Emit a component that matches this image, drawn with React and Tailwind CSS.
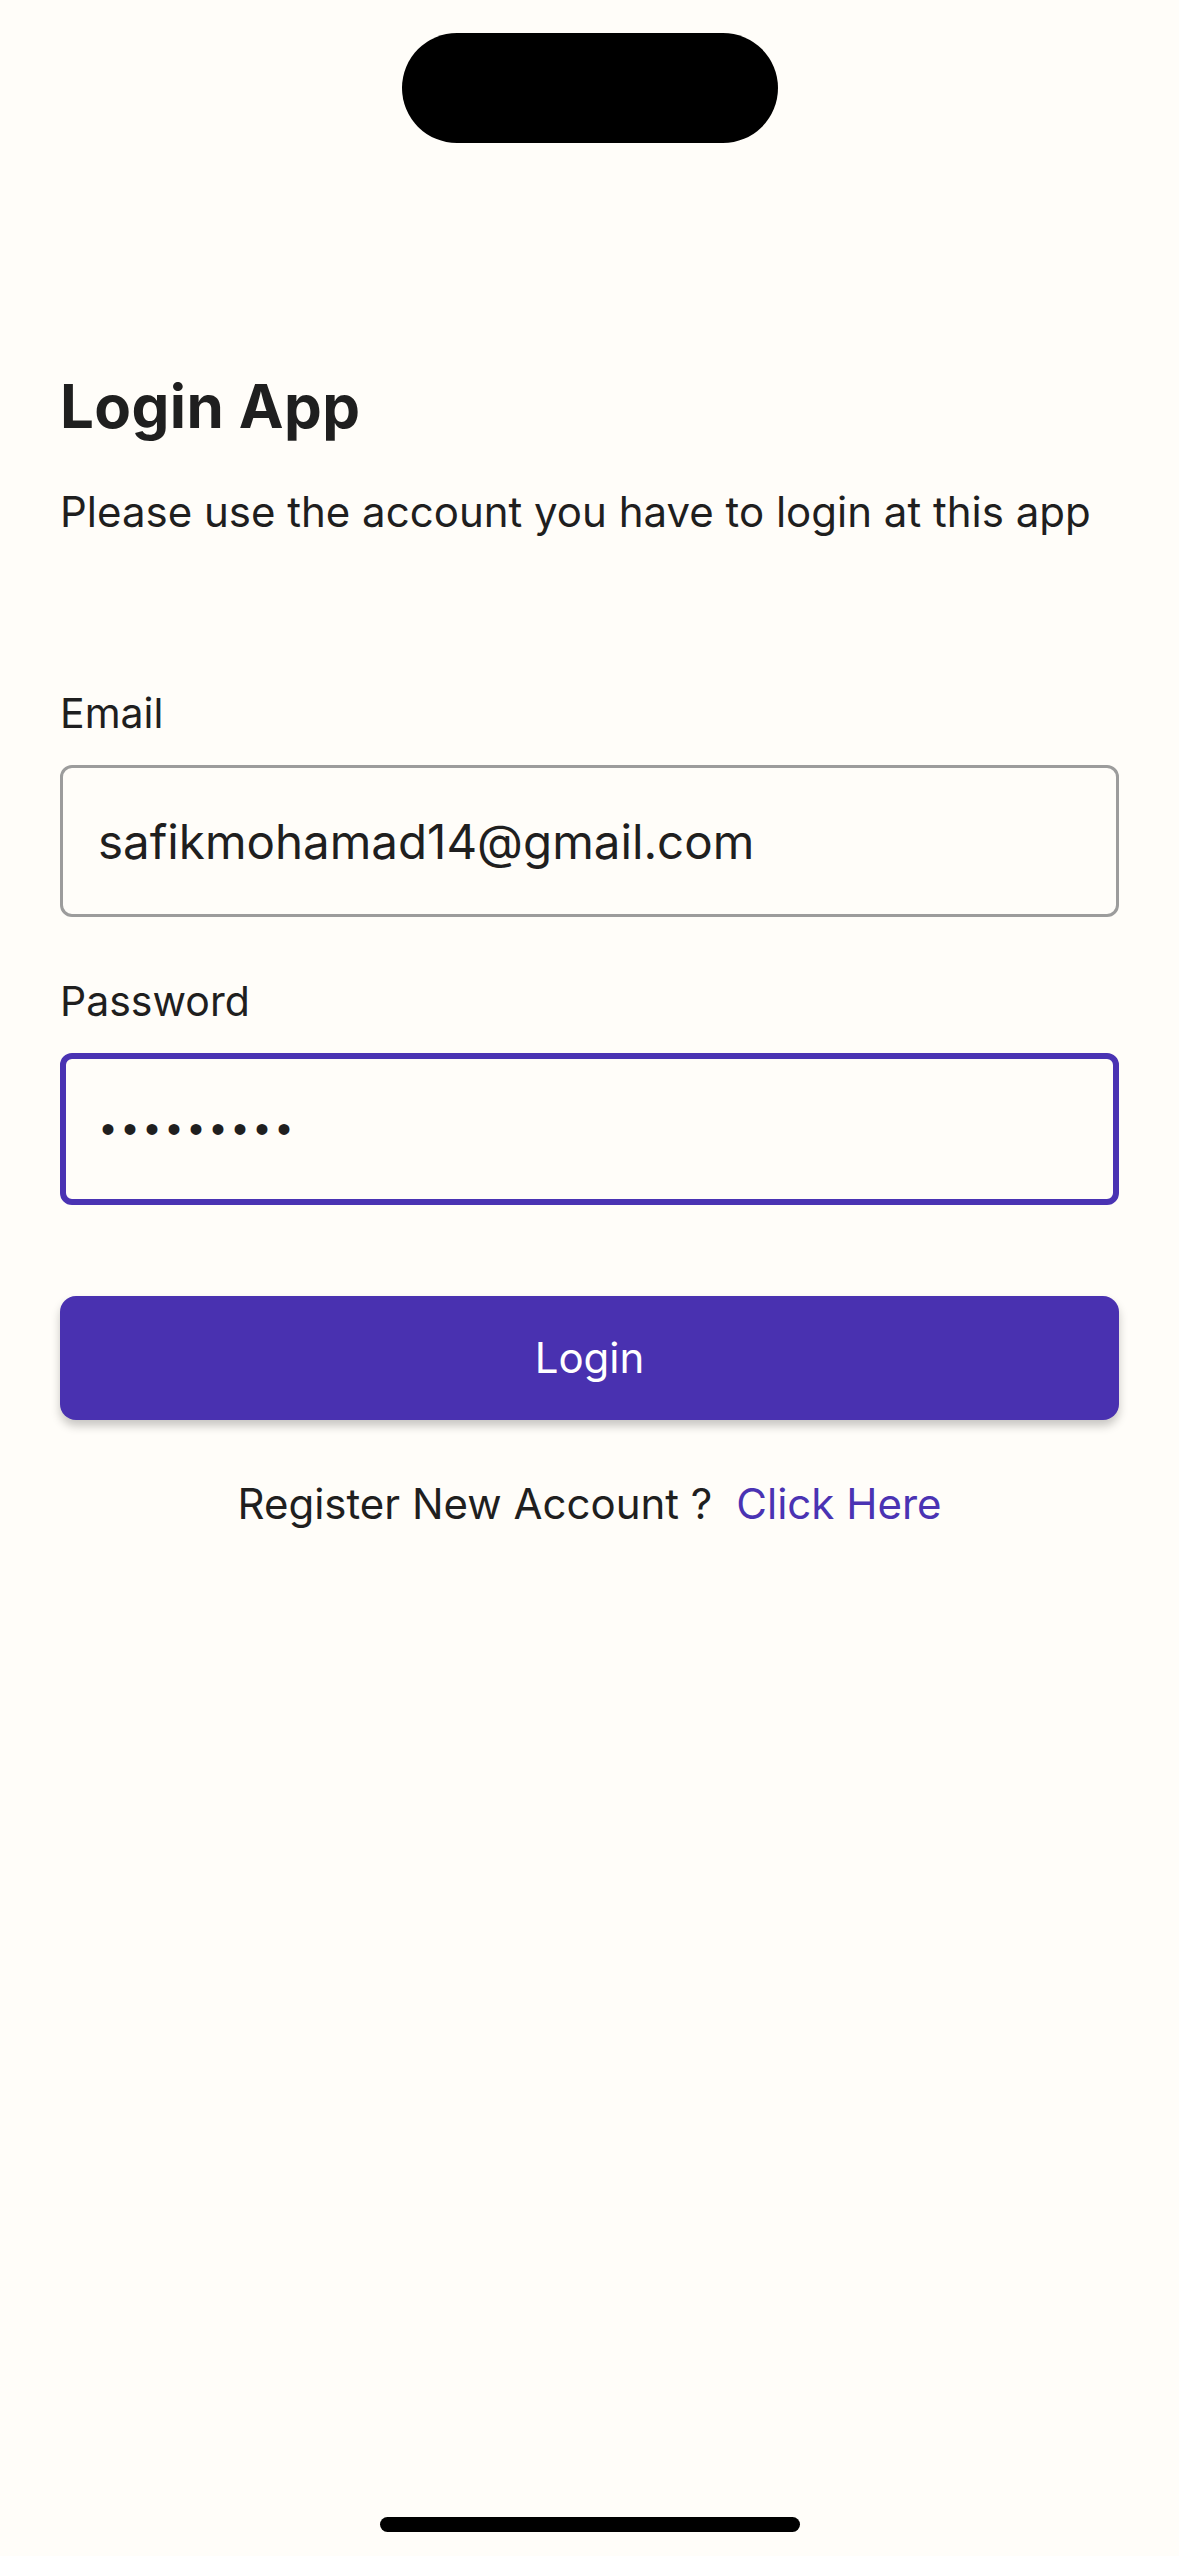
import React from 'react';

export default function App() {
  const font = { fontFamily: 'Inter, "Noto Sans", sans-serif' };

  return (
    <div className="min-h-[2556px] w-full bg-[#fffdf9] flex flex-col text-[#1f1f1f]" style={font}>
      {/* Status bar with dynamic island */}
      <div className="h-[177px] flex justify-center pt-[33px]">
        <div className="w-[376px] h-[110px] rounded-full bg-black" />
      </div>

      <div className="px-[60px] flex flex-col">
        {/* Heading */}
        <h1 className="mt-[199px] text-[60px] leading-[60px] font-bold tracking-[0.4px]">Login App</h1>
        <p className="mt-[55px] text-[42px] leading-[42px]">
          Please use the account you have to login at this app
        </p>

        {/* Email */}
        <label className="mt-[159px] text-[41px] leading-[42px]">Email</label>
        <div className="mt-[31px] h-[152px] rounded-[12px] border-[3px] border-[#9c9c9c] flex items-center pl-[35px]">
          <span className="text-[47.5px] leading-[48px] pt-[2px]">safikmohamad14@gmail.com</span>
        </div>

        {/* Password */}
        <label className="mt-[63px] text-[41px] leading-[42px]">Password</label>
        <div className="mt-[31px] h-[152px] rounded-[12px] border-[6px] border-[#4a33b3] flex items-center pl-[35px]">
          <span className="text-[40px] leading-[40px] tracking-[8px]" style={{ fontFamily: '"Liberation Sans", sans-serif' }}>
            •••••••••
          </span>
        </div>

        {/* Login button */}
        <button className="mt-[91px] h-[124px] w-full rounded-[16px] bg-[#4931b0] text-white text-[42px] leading-[42px] shadow-[0_6px_10px_rgba(0,0,0,0.22)]">
          Login
        </button>

        {/* Register */}
        <p className="mt-[63px] text-center text-[42px] leading-[42px]">
          Register New Account ?
          <span className="ml-[24px] text-[#4a33b3]">Click Here</span>
        </p>
      </div>

      <div className="flex-1" />

      {/* Home indicator */}
      <div className="flex justify-center pb-[24px]">
        <div className="w-[420px] h-[15px] rounded-full bg-black" />
      </div>
    </div>
  );
}
